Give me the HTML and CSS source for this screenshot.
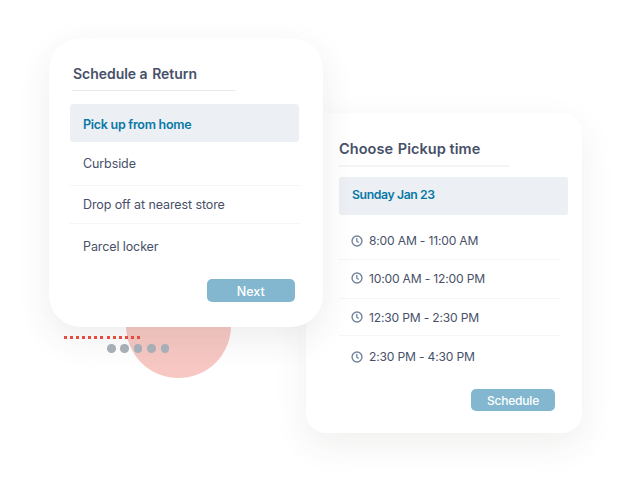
FILE: index.html
```html
<!DOCTYPE html>
<html lang="en">
<head>
<meta charset="utf-8">
<title>Schedule a Return</title>
<link rel="stylesheet" href="styles.css">
</head>
<body>
<svg width="0" height="0" class="defs"><symbol id="clock" viewBox="0 0 12 12"><circle cx="6" cy="6" r="4.95" fill="none" stroke="currentColor" stroke-width="1.4"/><path d="M5.8 3.1V6.2L7.7 7.6" fill="none" stroke="currentColor" stroke-width="1.3"/></symbol></svg>
<main class="scene">
  <div class="disc"></div>
  <section class="card card-return">
    <h2 class="title">Schedule a <span class="word">Return</span></h2>
    <ul class="list">
      <li class="row selected"><span>Pick up from home</span></li>
      <li class="row row-curb">Curbside</li>
      <li class="row row-drop">Drop off at nearest store</li>
      <li class="row row-locker">Parcel locker</li>
    </ul>
    <button class="btn btn-next">Next</button>
  </section>
  <section class="card card-time">
    <h2 class="title title-time">Choose <span class="word">Pickup time</span></h2>
    <ul class="list">
      <li class="row selected day"><span>Sunday Jan 23</span></li>
      <li class="row slot slot-a"><svg class="clock"><use href="#clock"/></svg><span>8:00 AM - 11:00 AM</span></li>
      <li class="row slot slot-b"><svg class="clock"><use href="#clock"/></svg><span>10:00 AM - 12:00 PM</span></li>
      <li class="row slot slot-c"><svg class="clock"><use href="#clock"/></svg><span>12:30 PM - 2:30 PM</span></li>
      <li class="row slot slot-d"><svg class="clock"><use href="#clock"/></svg><span>2:30 PM - 4:30 PM</span></li>
    </ul>
    <button class="btn btn-schedule">Schedule</button>
  </section>
  <div class="dashes"></div>
  <div class="dots"><i></i><i></i><i></i><i></i><i></i></div>
</main>
</body>
</html>
```
FILE: styles.css
```css
* { box-sizing: border-box; }
body { margin: 0; background: #fff; font-family: Inter, sans-serif; color: #475069; overflow: hidden; }
.defs { position: absolute; }
.scene { position: relative; width: 630px; height: 492px; display: flex; align-items: flex-start; overflow: hidden; }
.card { background: #fff; display: flex; flex-direction: column; align-items: flex-start; flex: none; }
.card-return { z-index: 2; width: 274px; height: 289px; margin: 38.4px 0 0 48.5px; padding: 20px 22px 0 21.5px; border-radius: 32px; box-shadow: 0 12px 34px rgba(60, 60, 50, .09); }
.card-time { z-index: 1; width: 276px; height: 320px; margin: 113.4px 0 0 -16.5px; padding: 20px 14px 0 33px; border-radius: 20px; box-shadow: 0 12px 34px rgba(60, 60, 50, .08); }
.title { margin: 0 0 0 2px; width: 164.4px; height: 32.6px; padding-left: 1px; border-bottom: 1px solid #e8ebf0; font-size: 14px; line-height: 32.4px; letter-spacing: -.03px; font-weight: 600; white-space: nowrap; }
.title-time { margin-left: 0; width: 170px; height: 34.1px; padding-left: 0; border-bottom: 2px solid #f4f5f6; font-size: 14.5px; letter-spacing: .05px; }
.word { margin-left: 1px; }
.list { list-style: none; margin: 13.4px 0 0; padding: 0; width: 230px; }
.card-time .list { margin-top: 10px; }
.row { display: flex; align-items: center; padding-left: 13px; font-size: 12.5px; letter-spacing: -.1px; white-space: nowrap; border-bottom: 1px solid #f4f5f6; }
.selected { width: 229px; height: 37.5px; border: 0; border-radius: 3px; background: #ecf0f5; color: #0878a5; font-weight: 600; letter-spacing: -.27px; padding-top: 3px; }
.day { padding-top: 0; padding-bottom: 3px; font-size: 12.25px; letter-spacing: -.4px; }
.row-curb { height: 44px; }
.row-drop { height: 38px; }
.row-locker { height: 45px; border: 0; }
.slot { width: 221px; padding-left: 12px; font-size: 12.1px; letter-spacing: -.18px; }
.slot-a { height: 45px; padding-top: 8px; }
.slot-b { height: 39.5px; padding-bottom: 2px; }
.slot-c { height: 36.5px; }
.slot-d { height: 42px; border: 0; }
.clock { width: 12px; height: 12px; margin-right: 6px; color: #72839b; flex: none; }
.btn { border: 0; border-radius: 5px; background: #82b7cf; color: #fff; font: 500 12.5px Inter, sans-serif; padding: 0; }
.btn-next { width: 87.5px; height: 22.5px; margin: 10.5px 0 0 137px; padding-top: 1px; }
.btn-schedule { width: 84px; height: 21.5px; margin: 11.5px 0 0 132px; font-size: 12px; letter-spacing: -.2px; }
.disc { position: absolute; left: 126px; top: 273px; width: 104.5px; height: 104.5px; border-radius: 50%; background: #f7c8c3; }
.dashes { position: absolute; z-index: 3; left: 64px; top: 336px; width: 76px; height: 3px; background: repeating-linear-gradient(90deg, #e64b3d 0 3px, transparent 3px 6.08px); }
.dots { position: absolute; z-index: 3; left: 107px; top: 344.2px; display: flex; gap: 4.9px; }
.dots i { width: 8.5px; height: 8.5px; border-radius: 50%; background: #a6afb6; }
```
